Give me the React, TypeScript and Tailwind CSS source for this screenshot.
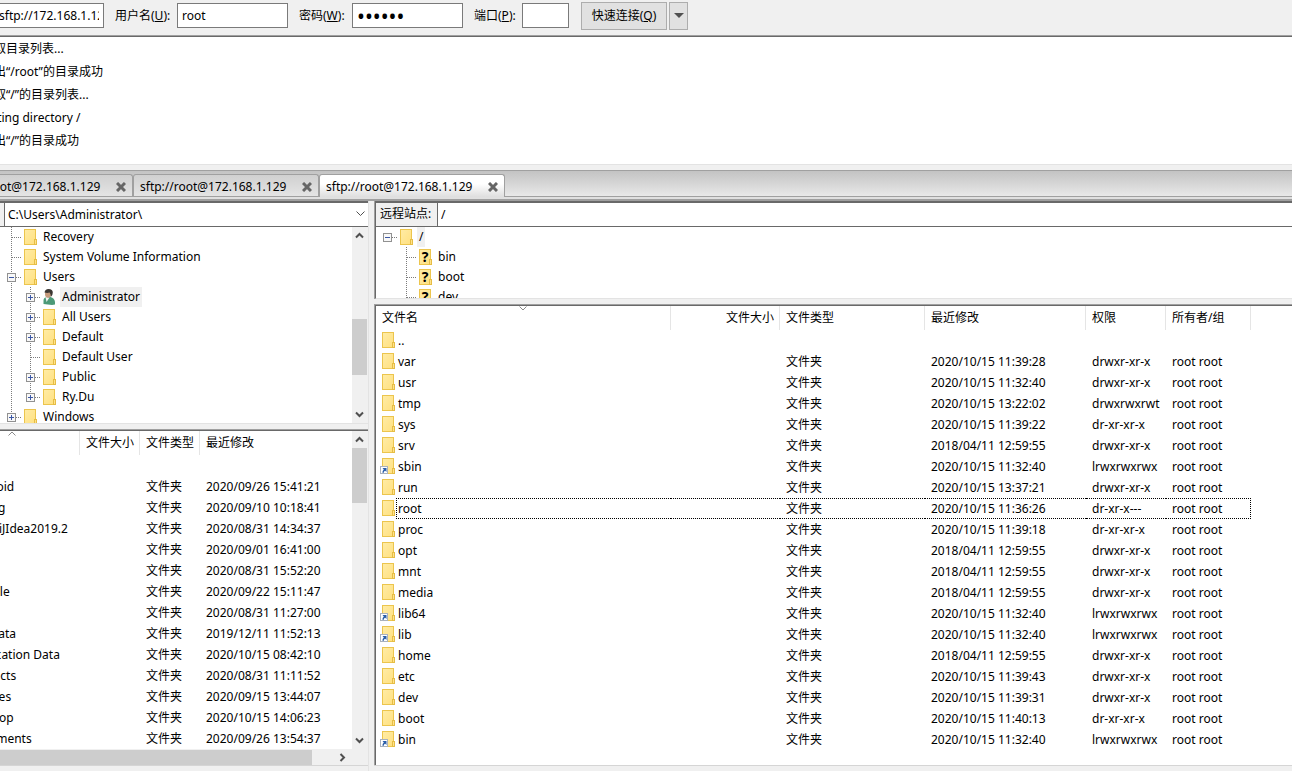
import React, { useState } from 'react';
import clsx from 'clsx';

type IconKind = 'folder' | 'link' | 'unknown' | 'user';
type Branch = 'open' | 'closed' | 'leaf';

interface TreeNode {
  label: string;
  level: number;
  branch: Branch;
  icon?: IconKind;
  selected?: boolean;
  // vertical connector above / below the middle of the row
  up?: boolean;
  down?: boolean;
  parentLine?: boolean;
}

interface FileRow {
  name: string;
  type?: string;
  modified?: string;
  perms?: string;
  owner?: string;
  link?: boolean;
  focused?: boolean;
}

interface Column {
  title: string;
  width: number;
  right?: boolean;
}

const DIR = '文件夹';

const LOG_LINES = [
  '读取目录列表...',
  '列出“/root”的目录成功',
  '读取“/”的目录列表...',
  'Listing directory /',
  '列出“/”的目录成功',
];

const LOCAL_TREE: TreeNode[] = [
  { label: 'Recovery', level: 0, branch: 'leaf', up: true, down: true },
  { label: 'System Volume Information', level: 0, branch: 'leaf', up: true, down: true },
  { label: 'Users', level: 0, branch: 'open', up: true, down: true },
  { label: 'Administrator', level: 1, branch: 'closed', icon: 'user', selected: true, up: true, down: true, parentLine: true },
  { label: 'All Users', level: 1, branch: 'closed', up: true, down: true, parentLine: true },
  { label: 'Default', level: 1, branch: 'closed', up: true, down: true, parentLine: true },
  { label: 'Default User', level: 1, branch: 'leaf', up: true, down: true, parentLine: true },
  { label: 'Public', level: 1, branch: 'closed', up: true, down: true, parentLine: true },
  { label: 'Ry.Du', level: 1, branch: 'closed', up: true, parentLine: true },
  { label: 'Windows', level: 0, branch: 'closed', up: true },
];

const REMOTE_TREE: TreeNode[] = [
  { label: '/', level: 0, branch: 'open', selected: true },
  { label: 'bin', level: 1, branch: 'leaf', icon: 'unknown', up: true, down: true },
  { label: 'boot', level: 1, branch: 'leaf', icon: 'unknown', up: true, down: true },
  { label: 'dev', level: 1, branch: 'leaf', icon: 'unknown', up: true, down: true },
];

const LOCAL_COLUMNS: Column[] = [
  { title: '', width: 135 },
  { title: '文件大小', width: 60, right: true },
  { title: '文件类型', width: 60 },
  { title: '最近修改', width: 180 },
];

const REMOTE_COLUMNS: Column[] = [
  { title: '文件名', width: 295 },
  { title: '文件大小', width: 109, right: true },
  { title: '文件类型', width: 145 },
  { title: '最近修改', width: 161 },
  { title: '权限', width: 80 },
  { title: '所有者/组', width: 85 },
];

const LOCAL_FILES: FileRow[] = [
  { name: '' },
  { name: '.android', type: DIR, modified: '2020/09/26 15:41:21' },
  { name: '.config', type: DIR, modified: '2020/09/10 10:18:41' },
  { name: '.IntelliJIdea2019.2', type: DIR, modified: '2020/08/31 14:34:37' },
  { name: '', type: DIR, modified: '2020/09/01 16:41:00' },
  { name: '', type: DIR, modified: '2020/08/31 15:52:20' },
  { name: '.bundle', type: DIR, modified: '2020/09/22 15:11:47' },
  { name: '', type: DIR, modified: '2020/08/31 11:27:00' },
  { name: 'AppData', type: DIR, modified: '2019/12/11 11:52:13' },
  { name: 'Application Data', type: DIR, modified: '2020/10/15 08:42:10' },
  { name: 'Contacts', type: DIR, modified: '2020/08/31 11:11:52' },
  { name: 'Cookies', type: DIR, modified: '2020/09/15 13:44:07' },
  { name: 'Desktop', type: DIR, modified: '2020/10/15 14:06:23' },
  { name: 'Documents', type: DIR, modified: '2020/09/26 13:54:37' },
];

const remote = (name: string, modified: string, perms: string, extra: Partial<FileRow> = {}): FileRow => ({
  name,
  type: DIR,
  modified,
  perms,
  owner: 'root root',
  ...extra,
});

const REMOTE_FILES: FileRow[] = [
  { name: '..' },
  remote('var', '2020/10/15 11:39:28', 'drwxr-xr-x'),
  remote('usr', '2020/10/15 11:32:40', 'drwxr-xr-x'),
  remote('tmp', '2020/10/15 13:22:02', 'drwxrwxrwt'),
  remote('sys', '2020/10/15 11:39:22', 'dr-xr-xr-x'),
  remote('srv', '2018/04/11 12:59:55', 'drwxr-xr-x'),
  remote('sbin', '2020/10/15 11:32:40', 'lrwxrwxrwx', { link: true }),
  remote('run', '2020/10/15 13:37:21', 'drwxr-xr-x'),
  remote('root', '2020/10/15 11:36:26', 'dr-xr-x---', { focused: true }),
  remote('proc', '2020/10/15 11:39:18', 'dr-xr-xr-x'),
  remote('opt', '2018/04/11 12:59:55', 'drwxr-xr-x'),
  remote('mnt', '2018/04/11 12:59:55', 'drwxr-xr-x'),
  remote('media', '2018/04/11 12:59:55', 'drwxr-xr-x'),
  remote('lib64', '2020/10/15 11:32:40', 'lrwxrwxrwx', { link: true }),
  remote('lib', '2020/10/15 11:32:40', 'lrwxrwxrwx', { link: true }),
  remote('home', '2018/04/11 12:59:55', 'drwxr-xr-x'),
  remote('etc', '2020/10/15 11:39:43', 'drwxr-xr-x'),
  remote('dev', '2020/10/15 11:39:31', 'drwxr-xr-x'),
  remote('boot', '2020/10/15 11:40:13', 'dr-xr-xr-x'),
  remote('bin', '2020/10/15 11:32:40', 'lrwxrwxrwx', { link: true }),
];

const ItemIcon: React.FC<{ kind?: IconKind }> = ({ kind = 'folder' }) => {
  if (kind === 'user') {
    return (
      <svg width="14" height="16" viewBox="0 0 14 16" className="block shrink-0">
        <path d="M0.5 15V11.5Q0.5 8.5 3.5 8H7.5Q11.5 9 12 13V15.5L9 16Z" fill="#4c9a78" />
        <path d="M2.5 8L3.5 13L6.5 8.5Z" fill="#f3f3f3" />
        <ellipse cx="5" cy="5" rx="3" ry="3.8" fill="#c69a7b" />
        <path d="M1.5 3.5Q2 0 5.5 0Q9.8 0 9.8 3.5Q9.8 6.5 7.8 8Q7.8 4.8 6.6 3.6Q4 4.4 1.5 3.5Z" fill="#3c3733" />
      </svg>
    );
  }
  return (
    <svg width="14" height="16" viewBox="0 0 14 16" overflow="visible" className="block shrink-0">
      <defs>
        <linearGradient id="paper" x1="0" y1="0" x2="1" y2="1">
          <stop offset="0" stopColor="#ffeca6" />
          <stop offset="1" stopColor="#ffe07f" />
        </linearGradient>
      </defs>
      <rect x="0.5" y="0.5" width="11" height="15" fill="url(#paper)" stroke="#ecc54d" />
      <rect x="10.5" y="10.5" width="2" height="5" fill="#ffe28a" stroke="#e6bd45" />
      {kind === 'unknown' && (
        <text x="6" y="13" textAnchor="middle" fontSize="14" fontWeight="bold" fill="#000">?</text>
      )}
      {kind === 'link' && (
        <g>
          <rect x="-1.5" y="8.5" width="7" height="7" fill="#fff" stroke="#a9b1bd" />
          <path d="M0.5 10H4.5V14L3.2 12.8Q2 13 1.8 14.8H0.4Q0.3 12.6 1.8 11.4Z" fill="#2b5ea8" />
        </g>
      )}
    </svg>
  );
};

const TreeLines: React.FC<{ node?: TreeNode; through?: boolean }> = ({ node, through }) => (
  <svg width="19" height="20" viewBox="0 0 19 20" className="block shrink-0" shapeRendering="crispEdges">
    <g stroke="#7b7b7b" strokeDasharray="1 1">
      {(through || node?.up) && <path d="M8.5 0V10" />}
      {(through || node?.down) && <path d="M8.5 10V20" />}
      {node && <path d="M9 10.5H19" />}
    </g>
    {node && node.branch !== 'leaf' && (
      <g>
        <rect x="4.5" y="6.5" width="8" height="8" fill="#f8f8f8" stroke="#919191" />
        <path d="M6 10.5H11" stroke="#3b57a5" />
        {node.branch === 'closed' && <path d="M8.5 8V13" stroke="#3b57a5" />}
      </g>
    )}
  </svg>
);

const Tree: React.FC<{ nodes: TreeNode[] }> = ({ nodes }) => (
  <ul className="min-w-0 flex-1 overflow-hidden bg-white pl-[3px]">
    {nodes.map(node => (
      <li key={node.label} className="flex h-5 items-center">
        {node.level > 0 && (node.parentLine ? <TreeLines through /> : <span className="w-[19px] shrink-0" />)}
        <TreeLines node={node} />
        <span className="flex w-[19px] shrink-0 pl-[2px]"><ItemIcon kind={node.icon} /></span>
        <span className={clsx('px-[2px] leading-5 whitespace-nowrap', node.selected && 'bg-[#f0f0f0]')}>{node.label}</span>
      </li>
    ))}
  </ul>
);

const Chevron: React.FC<{ dir: 'up' | 'down' | 'right' }> = ({ dir }) => (
  <svg width="9" height="9" viewBox="0 0 9 9" className="block" fill="none" stroke="#505050" strokeWidth="2">
    {dir === 'up' && <path d="M1 6.5L4.5 3L8 6.5" />}
    {dir === 'down' && <path d="M1 2.5L4.5 6L8 2.5" />}
    {dir === 'right' && <path d="M2.5 1L6 4.5L2.5 8" />}
  </svg>
);

const ScrollArrow: React.FC<{ dir: 'up' | 'down' | 'right'; label: string }> = ({ dir, label }) => (
  <button type="button" aria-label={label} className="flex h-[17px] w-[15px] shrink-0 items-center justify-center">
    <Chevron dir={dir} />
  </button>
);

const FileTable: React.FC<{ columns: Column[]; rows: FileRow[]; sort: 'up' | 'down' }> = ({ columns, rows, sort }) => {
  const keys: (keyof FileRow)[] = ['name', 'name', 'type', 'modified', 'perms', 'owner'];
  const total = columns.reduce((sum, c) => sum + c.width, 0);

  return (
    <table className="table-fixed border-separate border-spacing-0" style={{ width: total }}>
      <colgroup>
        {columns.map((c, i) => <col key={i} style={{ width: c.width }} />)}
      </colgroup>
      <thead>
        <tr className="h-6">
          {columns.map((c, i) => (
            <th key={i} scope="col" className={clsx('relative h-6 border-r border-[#e5e5e5] px-[5px] py-0 font-normal leading-5 whitespace-nowrap', c.right ? 'text-right' : 'pl-[6px] text-left')}>
              {c.title}
              {i === 0 && (
                <svg width="9" height="5" viewBox="0 0 9 5" className="absolute top-0 left-1/2 -translate-x-1/2" fill="none" stroke="#8a8a8a">
                  {sort === 'up' ? <path d="M1 4.5L4.5 1L8 4.5" /> : <path d="M1 0.5L4.5 4L8 0.5" />}
                </svg>
              )}
            </th>
          ))}
        </tr>
      </thead>
      <tbody>
        {rows.map((row, r) => (
          <tr key={r} className="h-[21px]">
            {columns.map((_, i) => {
              if (i === 0) {
                return (
                  <td key={i} className="h-[21px] p-0">
                    <div className="flex h-[21px] items-start pl-[6px]">
                      <span className="pt-[2px]"><ItemIcon kind={row.link ? 'link' : 'folder'} /></span>
                      <span className={clsx('h-[21px] min-w-0 flex-1 border-y border-l border-dotted pl-[1px] leading-[19px] whitespace-nowrap', row.focused ? 'border-black' : 'border-transparent')}>
                        {row.name}
                      </span>
                    </div>
                  </td>
                );
              }
              return (
                <td
                  key={i}
                  className={clsx(
                    'h-[21px] border-y border-dotted py-0 pl-[6px] leading-[19px] whitespace-nowrap',
                    row.focused ? 'border-black' : 'border-transparent',
                    i === columns.length - 1 && 'border-r',
                  )}
                >
                  {i > 1 && row[keys[i]]}
                </td>
              );
            })}
          </tr>
        ))}
      </tbody>
    </table>
  );
};

const SessionTab: React.FC<{ active: boolean; onSelect: () => void }> = ({ active, onSelect }) => (
  <div
    className={clsx(
      'flex w-[186px] shrink-0 items-center justify-between rounded-t-[3px] border border-b-0 border-[#a0a0a0] pt-[2px] pr-[6px] pl-[6px]',
      active ? '-mb-px h-[23px] bg-linear-to-b from-white from-40% to-[#dedede]' : 'h-[22px] bg-linear-to-b from-[#d0d0d0] to-[#e4e4e4]',
    )}
  >
    <button type="button" role="tab" aria-selected={active} onClick={onSelect} className="leading-5 whitespace-nowrap">
      sftp://root@172.168.1.129
    </button>
    <button type="button" aria-label="关闭">
      <svg width="10" height="10" viewBox="0 0 10 10" className="block" stroke="#666" strokeWidth="3">
        <path d="M1 1L9 9M9 1L1 9" />
      </svg>
    </button>
  </div>
);

const INPUT = 'h-[25px] border border-[#7a7a7a] bg-white px-1 outline-none';

const App: React.FC = () => {
  const [activeTab, setActiveTab] = useState(2);
  const [host, setHost] = useState('sftp://172.168.1.129');
  const [user, setUser] = useState('root');
  const [password, setPassword] = useState('123456');
  const [port, setPort] = useState('');

  return (
    <div className="flex h-screen flex-col overflow-hidden bg-[#f0f0f0] font-['Noto_Sans','Noto_Sans_CJK_SC',sans-serif] text-xs text-black">
      {/* Quick connect */}
      <form className="flex h-[35px] shrink-0 items-center pb-1" onSubmit={e => e.preventDefault()}>
        <input aria-label="主机" value={host} onChange={e => setHost(e.target.value)} className={`${INPUT} -ml-[6px] mr-[11px] w-[110px]`} />
        <label htmlFor="user" className="w-[62px]">用户名(<u>U</u>):</label>
        <input id="user" value={user} onChange={e => setUser(e.target.value)} className={`${INPUT} mr-[11px] w-[111px]`} />
        <label htmlFor="password" className="w-[53px]">密码(<u>W</u>):</label>
        <input id="password" type="password" value={password} onChange={e => setPassword(e.target.value)} className={`${INPUT} mr-[11px] w-[111px] text-[21px]`} />
        <label htmlFor="port" className="w-12">端口(<u>P</u>):</label>
        <input id="port" value={port} onChange={e => setPort(e.target.value)} className={`${INPUT} mr-3 w-[47px]`} />
        <button type="submit" className="mr-[2px] h-7 w-[86px] border border-[#adadad] bg-[#e1e1e1]">快速连接(<u>Q</u>)</button>
        <button type="button" aria-label="历史记录" className="flex h-7 w-[19px] items-center justify-center border border-[#adadad] bg-[#e1e1e1]">
          <svg width="10" height="5" viewBox="0 0 10 5"><path d="M0 0H10L5 5Z" fill="#505050" /></svg>
        </button>
      </form>

      {/* Message log */}
      <div className="border-t border-[#a0a0a0]">
        <div className="h-[129px] overflow-hidden border-t border-b border-t-[#696969] border-b-[#e3e3e3] bg-white">
          <div className="-ml-[18px]">
            {LOG_LINES.map((line, i) => (
              <p key={i} className="h-[23px] leading-[23px] whitespace-nowrap">{line}</p>
            ))}
          </div>
        </div>
      </div>

      {/* Session tabs */}
      <div className="mt-[5px] shrink-0 border-t border-[#a0a0a0] bg-linear-to-b from-[#c3c3c3] to-[#ededed]">
        <div role="tablist" className="-ml-[53px] flex h-[26px] items-end border-b border-[#a0a0a0]">
          {[0, 1, 2].map(i => (
            <SessionTab key={i} active={activeTab === i} onSelect={() => setActiveTab(i)} />
          ))}
        </div>
        <div className="h-[2px] bg-[#e0e0e0]" />
      </div>
      <div className="h-[2px] shrink-0 bg-[#a0a0a0]" />

      <main className="flex min-h-0 flex-1">
        {/* Local side */}
        <section className="flex w-[369px] shrink-0 flex-col border-r border-[#e3e3e3]">
          <div className="flex h-[26px] shrink-0 border-t-2 border-b border-[#696969]">
            <div className="relative ml-1 flex-1 border-l border-[#696969] bg-white">
              <select aria-label="本地站点" className="h-full w-full appearance-none pl-[3px] outline-none">
                <option>C:\Users\Administrator\</option>
              </select>
              <svg width="9" height="6" viewBox="0 0 9 6" className="pointer-events-none absolute top-2 right-[3px]" fill="none" stroke="#505050">
                <path d="M0.5 0.5L4.5 4.5L8.5 0.5" />
              </svg>
            </div>
          </div>
          <div className="flex h-[197px] shrink-0 border-b border-[#e3e3e3]">
            <Tree nodes={LOCAL_TREE} />
            <div className="flex w-4 flex-col">
              <ScrollArrow dir="up" label="向上滚动" />
              <div className="mt-[75px] h-14 w-[15px] bg-[#cdcdcd]" />
              <span className="flex-1" />
              <ScrollArrow dir="down" label="向下滚动" />
            </div>
          </div>
          <div className="mt-[5px] flex min-h-0 flex-1 flex-col border-t border-[#a0a0a0]">
            <div className="flex min-h-0 flex-1 border-t border-[#696969]">
              <div className="min-w-0 flex-1 overflow-hidden bg-white">
                <div className="-ml-[55px]">
                  <FileTable columns={LOCAL_COLUMNS} rows={LOCAL_FILES} sort="up" />
                </div>
              </div>
              <div className="flex w-4 flex-col">
                <ScrollArrow dir="up" label="向上滚动" />
                <div className="h-[55px] w-[15px] bg-[#cdcdcd]" />
                <span className="flex-1" />
                <ScrollArrow dir="down" label="向下滚动" />
              </div>
            </div>
            <div className="flex h-4 shrink-0 items-center">
              <div className="h-[15px] w-[312px] bg-[#cdcdcd]" />
              <span className="flex-1" />
              <ScrollArrow dir="right" label="向右滚动" />
              <span className="w-[18px]" />
            </div>
          </div>
          <div className="h-[6px] shrink-0 border-t border-[#d5d5d5]" />
        </section>

        {/* Remote side */}
        <section className="ml-[5px] flex min-w-0 flex-1 flex-col">
          <div className="shrink-0 border-l border-[#a0a0a0]">
            <div className="flex h-[26px] border-t-2 border-b border-l border-[#696969]">
              <label htmlFor="remote-path" className="w-[61px] pl-1 leading-[22px]">远程站点:</label>
              <select id="remote-path" className="h-full flex-1 appearance-none border-l border-[#696969] bg-white pl-[3px] outline-none">
                <option>/</option>
              </select>
            </div>
            <div className="flex h-[72px] border-b border-l border-b-[#e3e3e3] border-l-[#696969]">
              <Tree nodes={REMOTE_TREE} />
            </div>
          </div>
          <div className="mt-[5px] flex min-h-0 flex-1 border-t border-l border-[#a0a0a0]">
            <div className="min-w-0 flex-1 overflow-hidden border-t border-l border-[#696969] bg-white">
              <FileTable columns={REMOTE_COLUMNS} rows={REMOTE_FILES} sort="down" />
            </div>
          </div>
          <div className="h-[6px] shrink-0 border-t border-[#d5d5d5]" />
        </section>
      </main>
    </div>
  );
};

export default App;
